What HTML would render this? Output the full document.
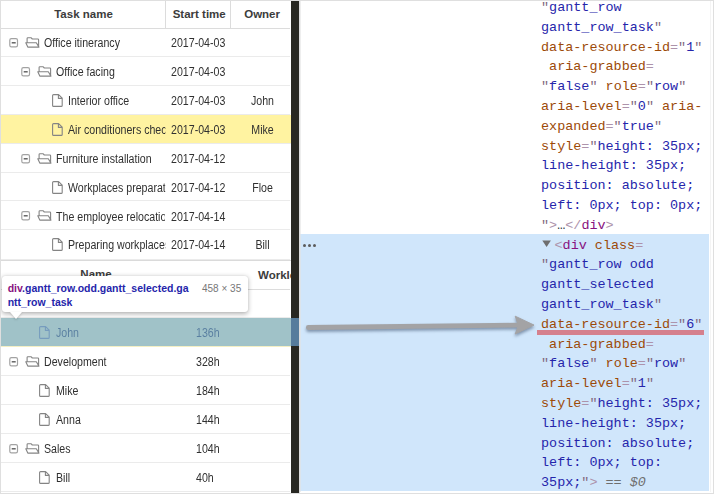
<!DOCTYPE html>
<html>
<head>
<meta charset="utf-8">
<title>Gantt resource row inspect</title>
<style>
html,body{margin:0;padding:0;}
body{width:714px;height:494px;position:relative;overflow:hidden;background:#fff;font-family:"Liberation Sans",sans-serif;font-size:11.5px;color:#3a3a3a;}
#frame{position:absolute;left:0;top:0;width:712px;height:492px;border:1px solid #dfdfdf;z-index:50;pointer-events:none;}
.abs{position:absolute;}
/* left grids */
#g1{position:absolute;left:1px;top:1px;width:290.4px;height:259.2px;overflow:hidden;background:#fff;}
#g2{position:absolute;left:1px;top:260px;width:290.4px;height:233px;border-top:1px solid #dadada;overflow:hidden;background:#fff;}
.hd{position:absolute;left:0;top:0;width:289px;height:26.5px;border-bottom:1px solid #dcdcdc;font-weight:bold;color:#3c3c3c;}
.hd span{position:absolute;top:0;line-height:27px;text-align:center;white-space:nowrap;}
.row{position:absolute;left:0;width:289px;height:27.8px;border-bottom:1px solid #ebebeb;white-space:nowrap;}
.row.sel{background:#fff3a1;width:290px;}
.row span{position:absolute;top:0;line-height:30.2px;color:#303030;white-space:nowrap;overflow:hidden;font-size:12px;transform:scaleX(.885);transform-origin:0 50%;}
.vl{position:absolute;top:0;width:1px;height:27px;background:#dcdcdc;}
svg.ic{position:absolute;overflow:visible;}
.dot{position:absolute;top:243.1px;width:3px;height:3px;border-radius:50%;background:#5c5c5c;}
#ov{position:absolute;left:1px;top:318px;width:298px;height:28px;background:rgba(111,168,220,.66);z-index:5;}
#tip{position:absolute;left:1.5px;top:276.2px;width:246.5px;height:35.5px;background:#fff;border-radius:3px;box-shadow:0 1.5px 5px rgba(0,0,0,.3),0 0 1px rgba(0,0,0,.15);z-index:6;font-family:"Liberation Sans",sans-serif;font-size:10.5px;line-height:14.1px;white-space:nowrap;}
#tip b{position:relative;top:4.7px;left:6.2px;}
#sz{position:absolute;left:200.5px;top:5.6px;color:#777;font-size:10px;}
#tipa{position:absolute;left:8px;top:35.4px;width:0;height:0;border-left:6px solid transparent;border-right:6px solid transparent;border-top:7px solid #fff;filter:drop-shadow(0 1.5px 1px rgba(0,0,0,.2));}
/* dark bar */
#bar{position:absolute;left:291px;top:1px;width:8px;border-right:1px solid #dedede;height:493px;background:#282822;}
/* devtools */
#dt{position:absolute;left:300px;top:1px;width:412px;height:491px;background:#fff;overflow:hidden;font-family:"Liberation Mono","DejaVu Sans Mono",monospace;font-size:13.45px;}
#hl{position:absolute;left:0;top:233px;width:409px;height:257px;background:#d0e6fb;}
#dtr{position:absolute;left:410px;top:0;width:1px;height:493px;background:#f4f4f4;}
#dtl{position:absolute;left:0;top:0;width:1px;height:493px;background:rgba(226,226,226,.6);}
.ln{position:absolute;left:241px;height:19.8px;line-height:19.8px;white-space:pre;}
.p{color:#ad93ab;} .q{color:#836a80;} .t{color:#881280;} .n{color:#9c4a08;} .v{color:#2525ab;} .g{color:#6e6e6e;}
</style>
</head>
<body>
<div id="g1">
  <div class="hd">
    <span style="left:0;width:165px;">Task name</span>
    <span style="left:165.7px;width:65px;">Start time</span>
    <span style="left:230.6px;width:61px;">Owner</span>
    <i class="vl" style="left:164px"></i><i class="vl" style="left:229px"></i>
  </div>
  <div class="row" style="top:27.4px"><svg class="ic" style="left:8px;top:9.9px" width="10" height="10" viewBox="0 0 10 10"><rect x="0.8" y="0.7" width="7.7" height="8.1" rx="1.6" fill="#fff" stroke="#a2a2a2" stroke-width="1.2"/><path d="M2.7 4.8 H6.7" stroke="#5a5a5a" stroke-width="1.4"/></svg><svg class="ic" style="left:24px;top:8.8px" width="15" height="11" viewBox="0 0 15 11"><path d="M2.1 5.5 V1.5 Q2.1 0.7 2.9 0.7 H6 L7.3 2 H12.8 Q13.6 2 13.6 2.8 V9 M0.8 5.7 H11.3 L14 10.1 H2.8 Z" fill="none" stroke="#848484" stroke-width="1.1" stroke-linejoin="round"/></svg><span style="left:43px;width:136.723px;">Office itinerancy</span><span style="left:170px;width:64px;">2017-04-03</span><span style="left:230.7px;width:61px;text-align:center;transform-origin:50% 50%;"></span></div>
  <div class="row" style="top:56.25px"><svg class="ic" style="left:20px;top:9.9px" width="10" height="10" viewBox="0 0 10 10"><rect x="0.8" y="0.7" width="7.7" height="8.1" rx="1.6" fill="#fff" stroke="#a2a2a2" stroke-width="1.2"/><path d="M2.7 4.8 H6.7" stroke="#5a5a5a" stroke-width="1.4"/></svg><svg class="ic" style="left:36px;top:8.8px" width="15" height="11" viewBox="0 0 15 11"><path d="M2.1 5.5 V1.5 Q2.1 0.7 2.9 0.7 H6 L7.3 2 H12.8 Q13.6 2 13.6 2.8 V9 M0.8 5.7 H11.3 L14 10.1 H2.8 Z" fill="none" stroke="#848484" stroke-width="1.1" stroke-linejoin="round"/></svg><span style="left:55px;width:123.164px;">Office facing</span><span style="left:170px;width:64px;">2017-04-03</span><span style="left:230.7px;width:61px;text-align:center;transform-origin:50% 50%;"></span></div>
  <div class="row" style="top:85.1px"><svg class="ic" style="left:51px;top:7.9px" width="11" height="13" viewBox="0 0 11 13"><path d="M1.6 0.6 H6.6 L10.2 4.2 V11.4 Q10.2 12.4 9.2 12.4 H1.6 Q0.6 12.4 0.6 11.4 V1.6 Q0.6 0.6 1.6 0.6 Z M6.4 0.8 V4.4 H10" fill="none" stroke="#848484" stroke-width="1.1" stroke-linejoin="round"/></svg><span style="left:67px;width:109.605px;">Interior office</span><span style="left:170px;width:64px;">2017-04-03</span><span style="left:230.7px;width:61px;text-align:center;transform-origin:50% 50%;">John</span></div>
  <div class="row sel" style="top:113.95px"><svg class="ic" style="left:51px;top:7.9px" width="11" height="13" viewBox="0 0 11 13"><path d="M1.6 0.6 H6.6 L10.2 4.2 V11.4 Q10.2 12.4 9.2 12.4 H1.6 Q0.6 12.4 0.6 11.4 V1.6 Q0.6 0.6 1.6 0.6 Z M6.4 0.8 V4.4 H10" fill="none" stroke="#848484" stroke-width="1.1" stroke-linejoin="round"/></svg><span style="left:67px;width:109.605px;">Air conditioners check</span><span style="left:170px;width:64px;">2017-04-03</span><span style="left:230.7px;width:61px;text-align:center;transform-origin:50% 50%;">Mike</span></div>
  <div class="row" style="top:142.8px"><svg class="ic" style="left:20px;top:9.9px" width="10" height="10" viewBox="0 0 10 10"><rect x="0.8" y="0.7" width="7.7" height="8.1" rx="1.6" fill="#fff" stroke="#a2a2a2" stroke-width="1.2"/><path d="M2.7 4.8 H6.7" stroke="#5a5a5a" stroke-width="1.4"/></svg><svg class="ic" style="left:36px;top:8.8px" width="15" height="11" viewBox="0 0 15 11"><path d="M2.1 5.5 V1.5 Q2.1 0.7 2.9 0.7 H6 L7.3 2 H12.8 Q13.6 2 13.6 2.8 V9 M0.8 5.7 H11.3 L14 10.1 H2.8 Z" fill="none" stroke="#848484" stroke-width="1.1" stroke-linejoin="round"/></svg><span style="left:55px;width:123.164px;">Furniture installation</span><span style="left:170px;width:64px;">2017-04-12</span><span style="left:230.7px;width:61px;text-align:center;transform-origin:50% 50%;"></span></div>
  <div class="row" style="top:171.65px"><svg class="ic" style="left:51px;top:7.9px" width="11" height="13" viewBox="0 0 11 13"><path d="M1.6 0.6 H6.6 L10.2 4.2 V11.4 Q10.2 12.4 9.2 12.4 H1.6 Q0.6 12.4 0.6 11.4 V1.6 Q0.6 0.6 1.6 0.6 Z M6.4 0.8 V4.4 H10" fill="none" stroke="#848484" stroke-width="1.1" stroke-linejoin="round"/></svg><span style="left:67px;width:109.605px;">Workplaces preparation</span><span style="left:170px;width:64px;">2017-04-12</span><span style="left:230.7px;width:61px;text-align:center;transform-origin:50% 50%;">Floe</span></div>
  <div class="row" style="top:200.5px"><svg class="ic" style="left:20px;top:9.9px" width="10" height="10" viewBox="0 0 10 10"><rect x="0.8" y="0.7" width="7.7" height="8.1" rx="1.6" fill="#fff" stroke="#a2a2a2" stroke-width="1.2"/><path d="M2.7 4.8 H6.7" stroke="#5a5a5a" stroke-width="1.4"/></svg><svg class="ic" style="left:36px;top:8.8px" width="15" height="11" viewBox="0 0 15 11"><path d="M2.1 5.5 V1.5 Q2.1 0.7 2.9 0.7 H6 L7.3 2 H12.8 Q13.6 2 13.6 2.8 V9 M0.8 5.7 H11.3 L14 10.1 H2.8 Z" fill="none" stroke="#848484" stroke-width="1.1" stroke-linejoin="round"/></svg><span style="left:55px;width:123.164px;">The employee relocation</span><span style="left:170px;width:64px;">2017-04-14</span><span style="left:230.7px;width:61px;text-align:center;transform-origin:50% 50%;"></span></div>
  <div class="row" style="top:229.35px;height:28.8px"><svg class="ic" style="left:51px;top:7.9px" width="11" height="13" viewBox="0 0 11 13"><path d="M1.6 0.6 H6.6 L10.2 4.2 V11.4 Q10.2 12.4 9.2 12.4 H1.6 Q0.6 12.4 0.6 11.4 V1.6 Q0.6 0.6 1.6 0.6 Z M6.4 0.8 V4.4 H10" fill="none" stroke="#848484" stroke-width="1.1" stroke-linejoin="round"/></svg><span style="left:67px;width:109.605px;">Preparing workplaces</span><span style="left:170px;width:64px;">2017-04-14</span><span style="left:230.7px;width:61px;text-align:center;transform-origin:50% 50%;">Bill</span></div>
</div>
<div id="g2">
  <div class="hd" style="height:28.3px;">
    <span style="left:0;width:190px;line-height:27.4px;">Name</span>
    <span style="left:257px;line-height:28.8px;">Workload</span>
  </div>
  <div class="row" style="top:28.7px;height:27.3px"><svg class="ic" style="left:8px;top:9.9px" width="10" height="10" viewBox="0 0 10 10"><rect x="0.8" y="0.7" width="7.7" height="8.1" rx="1.6" fill="#fff" stroke="#a2a2a2" stroke-width="1.2"/><path d="M2.7 4.8 H6.7" stroke="#5a5a5a" stroke-width="1.4"/></svg><svg class="ic" style="left:24px;top:8.8px" width="15" height="11" viewBox="0 0 15 11"><path d="M2.1 5.5 V1.5 Q2.1 0.7 2.9 0.7 H6 L7.3 2 H12.8 Q13.6 2 13.6 2.8 V9 M0.8 5.7 H11.3 L14 10.1 H2.8 Z" fill="none" stroke="#848484" stroke-width="1.1" stroke-linejoin="round"/></svg><span style="left:43px;width:160.452px;">Management</span><span style="left:194.5px;width:60px;">136h</span></div>
  <div class="row sel" style="top:57px;height:28px;border-bottom-color:#f4efc4"><svg class="ic" style="left:38px;top:7.9px" width="11" height="13" viewBox="0 0 11 13"><path d="M1.6 0.6 H6.6 L10.2 4.2 V11.4 Q10.2 12.4 9.2 12.4 H1.6 Q0.6 12.4 0.6 11.4 V1.6 Q0.6 0.6 1.6 0.6 Z M6.4 0.8 V4.4 H10" fill="none" stroke="#848484" stroke-width="1.1" stroke-linejoin="round"/></svg><span style="left:55px;width:146.893px;">John</span><span style="left:194.5px;width:60px;">136h</span></div>
  <div class="row" style="top:86.4px"><svg class="ic" style="left:8px;top:9.9px" width="10" height="10" viewBox="0 0 10 10"><rect x="0.8" y="0.7" width="7.7" height="8.1" rx="1.6" fill="#fff" stroke="#a2a2a2" stroke-width="1.2"/><path d="M2.7 4.8 H6.7" stroke="#5a5a5a" stroke-width="1.4"/></svg><svg class="ic" style="left:24px;top:8.8px" width="15" height="11" viewBox="0 0 15 11"><path d="M2.1 5.5 V1.5 Q2.1 0.7 2.9 0.7 H6 L7.3 2 H12.8 Q13.6 2 13.6 2.8 V9 M0.8 5.7 H11.3 L14 10.1 H2.8 Z" fill="none" stroke="#848484" stroke-width="1.1" stroke-linejoin="round"/></svg><span style="left:43px;width:160.452px;">Development</span><span style="left:194.5px;width:60px;">328h</span></div>
  <div class="row" style="top:115.25px"><svg class="ic" style="left:38px;top:7.9px" width="11" height="13" viewBox="0 0 11 13"><path d="M1.6 0.6 H6.6 L10.2 4.2 V11.4 Q10.2 12.4 9.2 12.4 H1.6 Q0.6 12.4 0.6 11.4 V1.6 Q0.6 0.6 1.6 0.6 Z M6.4 0.8 V4.4 H10" fill="none" stroke="#848484" stroke-width="1.1" stroke-linejoin="round"/></svg><span style="left:55px;width:146.893px;">Mike</span><span style="left:194.5px;width:60px;">184h</span></div>
  <div class="row" style="top:144.1px"><svg class="ic" style="left:38px;top:7.9px" width="11" height="13" viewBox="0 0 11 13"><path d="M1.6 0.6 H6.6 L10.2 4.2 V11.4 Q10.2 12.4 9.2 12.4 H1.6 Q0.6 12.4 0.6 11.4 V1.6 Q0.6 0.6 1.6 0.6 Z M6.4 0.8 V4.4 H10" fill="none" stroke="#848484" stroke-width="1.1" stroke-linejoin="round"/></svg><span style="left:55px;width:146.893px;">Anna</span><span style="left:194.5px;width:60px;">144h</span></div>
  <div class="row" style="top:172.95px"><svg class="ic" style="left:8px;top:9.9px" width="10" height="10" viewBox="0 0 10 10"><rect x="0.8" y="0.7" width="7.7" height="8.1" rx="1.6" fill="#fff" stroke="#a2a2a2" stroke-width="1.2"/><path d="M2.7 4.8 H6.7" stroke="#5a5a5a" stroke-width="1.4"/></svg><svg class="ic" style="left:24px;top:8.8px" width="15" height="11" viewBox="0 0 15 11"><path d="M2.1 5.5 V1.5 Q2.1 0.7 2.9 0.7 H6 L7.3 2 H12.8 Q13.6 2 13.6 2.8 V9 M0.8 5.7 H11.3 L14 10.1 H2.8 Z" fill="none" stroke="#848484" stroke-width="1.1" stroke-linejoin="round"/></svg><span style="left:43px;width:160.452px;">Sales</span><span style="left:194.5px;width:60px;">104h</span></div>
  <div class="row" style="top:201.8px"><svg class="ic" style="left:38px;top:7.9px" width="11" height="13" viewBox="0 0 11 13"><path d="M1.6 0.6 H6.6 L10.2 4.2 V11.4 Q10.2 12.4 9.2 12.4 H1.6 Q0.6 12.4 0.6 11.4 V1.6 Q0.6 0.6 1.6 0.6 Z M6.4 0.8 V4.4 H10" fill="none" stroke="#848484" stroke-width="1.1" stroke-linejoin="round"/></svg><span style="left:55px;width:146.893px;">Bill</span><span style="left:194.5px;width:60px;">40h</span></div>
</div>
<div id="bar"></div>
<div id="dt">
  <div id="hl"></div><div id="dtl"></div><div id="dtr"></div>
  <div class="ln" style="top:-3.05px"><span class="q">"</span><span class="v">gantt_row</span></div>
  <div class="ln" style="top:16.75px"><span class="v">gantt_row_task</span><span class="q">"</span></div>
  <div class="ln" style="top:36.55px"><span class="n">data-resource-id</span><span class="p">=</span><span class="q">"</span><span class="v">1</span><span class="q">"</span></div>
  <div class="ln" style="top:56.35px"> <span class="n">aria-grabbed</span><span class="p">=</span></div>
  <div class="ln" style="top:76.15px"><span class="q">"</span><span class="v">false</span><span class="q">"</span> <span class="n">role</span><span class="p">=</span><span class="q">"</span><span class="v">row</span><span class="q">"</span></div>
  <div class="ln" style="top:95.95px"><span class="n">aria-level</span><span class="p">=</span><span class="q">"</span><span class="v">0</span><span class="q">"</span> <span class="n">aria-</span></div>
  <div class="ln" style="top:115.75px"><span class="n">expanded</span><span class="p">=</span><span class="q">"</span><span class="v">true</span><span class="q">"</span></div>
  <div class="ln" style="top:135.55px"><span class="n">style</span><span class="p">=</span><span class="q">"</span><span class="v">height: 35px;</span></div>
  <div class="ln" style="top:155.35px"><span class="v">line-height: 35px;</span></div>
  <div class="ln" style="top:175.15px"><span class="v">position: absolute;</span></div>
  <div class="ln" style="top:194.95px"><span class="v">left: 0px; top: 0px;</span></div>
  <div class="ln" style="top:214.75px"><span class="q">"</span><span class="p">&gt;</span><span style="color:#303942">…</span><span class="p">&lt;/</span><span class="t">div</span><span class="p">&gt;</span></div>
  <div class="ln" style="top:234.55px"><span style="display:inline-block;width:13.5px"></span><span class="p">&lt;</span><span class="t">div</span> <span class="n">class</span><span class="p">=</span></div>
  <div class="ln" style="top:254.35px"><span class="q">"</span><span class="v">gantt_row odd</span></div>
  <div class="ln" style="top:274.15px"><span class="v">gantt_selected</span></div>
  <div class="ln" style="top:293.95px"><span class="v">gantt_row_task</span><span class="q">"</span></div>
  <div class="ln" style="top:313.75px"><span class="n">data-resource-id</span><span class="p">=</span><span class="q">"</span><span class="v">6</span><span class="q">"</span></div>
  <div class="ln" style="top:333.55px"> <span class="n">aria-grabbed</span><span class="p">=</span></div>
  <div class="ln" style="top:353.35px"><span class="q">"</span><span class="v">false</span><span class="q">"</span> <span class="n">role</span><span class="p">=</span><span class="q">"</span><span class="v">row</span><span class="q">"</span></div>
  <div class="ln" style="top:373.15px"><span class="n">aria-level</span><span class="p">=</span><span class="q">"</span><span class="v">1</span><span class="q">"</span></div>
  <div class="ln" style="top:392.95px"><span class="n">style</span><span class="p">=</span><span class="q">"</span><span class="v">height: 35px;</span></div>
  <div class="ln" style="top:412.75px"><span class="v">line-height: 35px;</span></div>
  <div class="ln" style="top:432.55px"><span class="v">position: absolute;</span></div>
  <div class="ln" style="top:452.35px"><span class="v">left: 0px; top:</span></div>
  <div class="ln" style="top:472.15px"><span class="v">35px;</span><span class="q">"</span><span class="p">&gt;</span><span class="g"> == </span><i class="g">$0</i></div>
  <svg class="abs" style="left:242px;top:239px" width="10" height="8" viewBox="0 0 10 8"><path d="M0.3 0.6 H8.9 L4.6 7 Z" fill="#6e6e6e"/></svg>
  <i class="dot" style="left:2.8px"></i><i class="dot" style="left:7.9px"></i><i class="dot" style="left:12.9px"></i>
  <div class="abs" style="left:236.5px;top:329px;width:167px;height:4.6px;background:#d5808d"></div>
  <svg class="abs" style="left:0;top:300px;filter:drop-shadow(0.5px 2px 1.5px rgba(60,80,110,.55))" width="250" height="50" viewBox="300 300 250 50"><path d="M308.3 326.5 L517 324.2" stroke="#a3a3a5" stroke-width="4.8" stroke-linecap="round" fill="none"/><path d="M515.2 315.2 L534 324.1 L515.2 333 L518.4 324.3 Z" fill="#a3a3a5" stroke="#a3a3a5" stroke-width="1" stroke-linejoin="round"/></svg>
</div>
<div id="ov"></div>
<div id="tip"><b class="t">div</b><b class="v">.gantt_row.odd.gantt_selected.ga<br>ntt_row_task</b><span id="sz">458 × 35</span><i id="tipa"></i></div>
<div id="frame"></div>
</body>
</html>
